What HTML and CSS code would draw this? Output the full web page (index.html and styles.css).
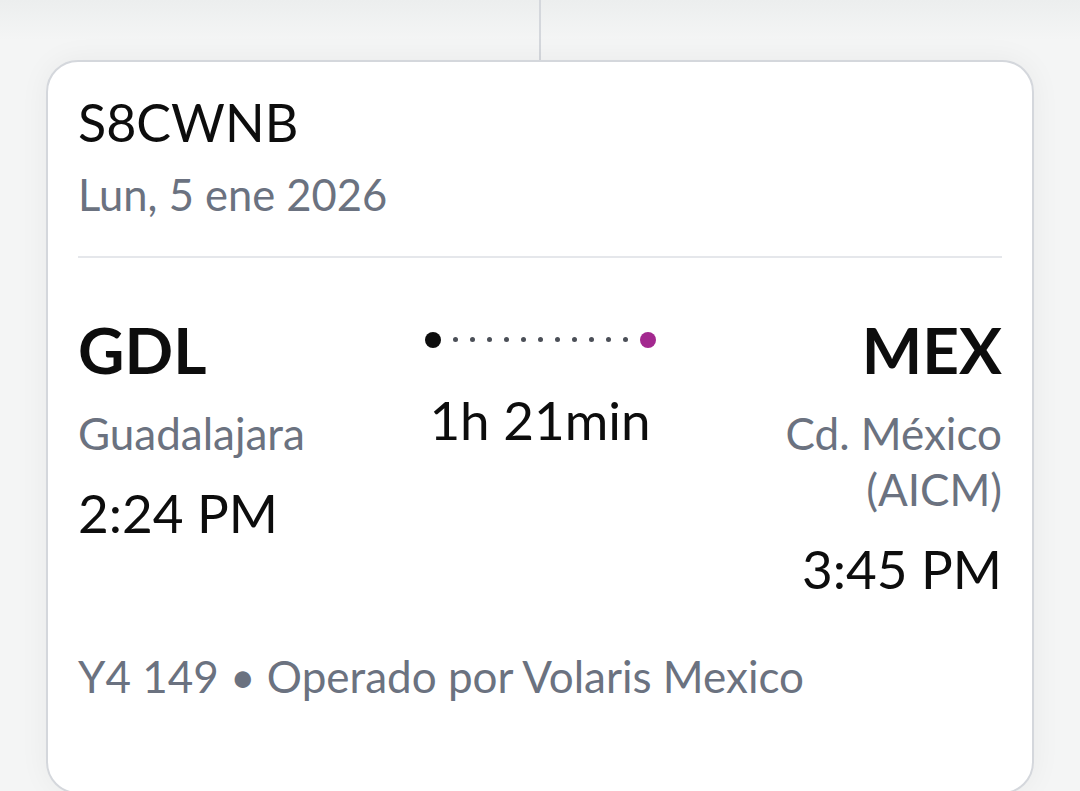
FILE: index.html
```html
<!DOCTYPE html>
<html lang="es">
<head>
    <meta charset="UTF-8">
    <meta name="viewport" content="width=device-width, initial-scale=1.0">
    <title>Vuelo S8CWNB</title>
    <link rel="stylesheet" href="styles.css">
</head>
<body>
    <div class="conector"></div>

    <section class="tarjeta">
        <h2 class="reserva">S8CWNB</h2>
        <p class="fecha">Lun, 5 ene 2026</p>

        <div class="ruta">
            <div class="punto origen">
                <h3>GDL</h3>
                <p class="ciudad">Guadalajara</p>
                <p class="hora">2:24 PM</p>
            </div>

            <div class="trayecto">
                <div class="puntos">
                    <span class="inicio"></span>
                    <span></span><span></span><span></span><span></span><span></span>
                    <span></span><span></span><span></span><span></span><span></span>
                    <span></span>
                    <span class="fin"></span>
                </div>
                <p class="duracion">1h 21min</p>
            </div>

            <div class="punto destino">
                <h3>MEX</h3>
                <p class="ciudad">Cd. México (AICM)</p>
                <p class="hora">3:45 PM</p>
            </div>
        </div>

        <p class="vuelo">Y4 149 • Operado por Volaris Mexico</p>
    </section>
</body>
</html>
```

FILE: styles.css
```css
* {
    margin: 0;
    padding: 0;
    box-sizing: border-box;
}

body {
    font-family: Lato, 'Noto Sans', sans-serif;
    background: linear-gradient(#eceeee, #f4f5f5 40px);
    padding: 0 46px;
    height: 791px;
    overflow: hidden;
    line-height: 1.2;
}

.conector {
    width: 2px;
    height: 60px;
    margin: 0 auto;
    background-color: #d4d7dc;
}

.tarjeta {
    background-color: #fff;
    border: 2px solid #d4d7dc;
    border-radius: 32px;
    padding: 29px 30px 89px;
    box-shadow: 0 0 30px rgba(0, 0, 0, 0.05);
}

.reserva {
    font-size: 52px;
    font-weight: 400;
    color: #0d0d0d;
}

.fecha {
    font-size: 43.5px;
    color: #6b7280;
    margin-top: 15px;
    padding-bottom: 35px;
    border-bottom: 2px solid #e5e7eb;
}

.ruta {
    display: grid;
    grid-template-columns: 1fr 1fr 1fr;
    margin-top: 54px;
}

.punto h3 {
    font-size: 64px;
    font-weight: 700;
    color: #0d0d0d;
}

.destino {
    text-align: right;
}

.ciudad {
    font-size: 44px;
    color: #6b7280;
    margin-top: 17px;
    line-height: 56px;
}

.hora {
    font-size: 53px;
    color: #0d0d0d;
    margin-top: 20px;
}

.trayecto {
    display: flex;
    flex-direction: column;
    align-items: center;
}

.puntos {
    display: flex;
    align-items: center;
    gap: 12px;
    margin-top: 20px;
}

.puntos span {
    width: 5px;
    height: 5px;
    border-radius: 50%;
    background-color: #4b4f57;
}

.puntos span.inicio,
.puntos span.fin {
    width: 16px;
    height: 16px;
    background-color: #0d0d0d;
}

.puntos span.fin {
    background-color: #a3288f;
}

.duracion {
    font-size: 53px;
    color: #0d0d0d;
    margin-top: 40px;
}

.vuelo {
    font-size: 44px;
    color: #6b7280;
    margin-top: 49px;
}
```
